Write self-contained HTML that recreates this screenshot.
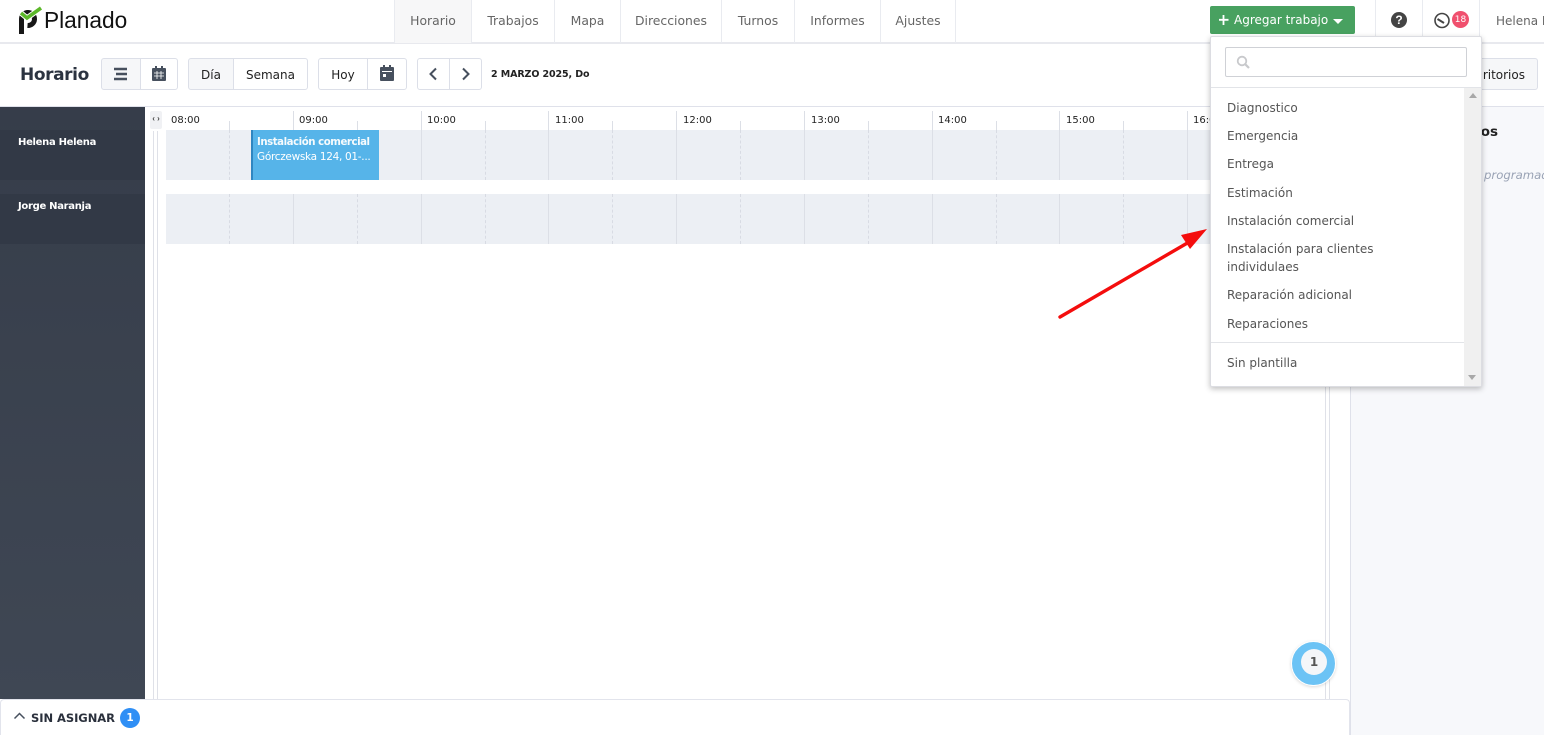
<!DOCTYPE html>
<html lang="es"><head><meta charset="utf-8"><title>Planado</title>
<style>
*{box-sizing:border-box}
html,body{margin:0;padding:0;width:1544px;height:735px;overflow:hidden;background:#fff;font-family:"DejaVu Sans","Liberation Sans",sans-serif;color:#333}
.a{position:absolute;white-space:nowrap}
.nav{top:0;height:43px;line-height:42px;font-size:12.4px;color:#666;border-right:1px solid #e9ebf0;text-align:center}
.b{top:58px;height:32px;border:1px solid #dcdfe8;line-height:32px;font-size:12px;text-align:center;color:#222;background:#fff}
.h{top:114px;font-size:10px;color:#222;line-height:14px}
.l{width:1px;background:#dcdfe6}
.d{width:0;border-left:1px dashed #d8dbe3}
.m{left:1227px;font-size:12px;color:#555;line-height:20px}
.n{left:18px;font:bold 10px/14px 'DejaVu Sans',sans-serif;color:#fff;letter-spacing:-.3px}
</style></head><body>
<!-- top bar -->
<div class="a" style="left:0;top:0;width:1544px;height:44px;border-bottom:2px solid #e8e9ee;background:#fff"></div>
<svg class="a" style="left:0;top:0" width="44" height="40" viewBox="0 0 44 40">
<path d="M21.500 34V19a6.500 6.500 0 1 1 6 6.500" fill="none" stroke="#171717" stroke-width="5"/>
<path d="M21 13l6 5L41 8" fill="none" stroke="#fff" stroke-width="5.500"/>
<path d="M21 13l6 5L41 8" fill="none" stroke="#5cb82a" stroke-width="3.600"/></svg>
<div class="a" style="left:44px;top:7px;font:22.700px/26px 'Liberation Sans',sans-serif;color:#111">Planado</div>
<div class="a nav" style="left:394px;width:78px;background:#f7f7f8;border-left:1px solid #e9ebf0">Horario</div>
<div class="a nav" style="left:472px;width:83px">Trabajos</div>
<div class="a nav" style="left:555px;width:66px">Mapa</div>
<div class="a nav" style="left:621px;width:101px">Direcciones</div>
<div class="a nav" style="left:722px;width:73px">Turnos</div>
<div class="a nav" style="left:795px;width:86px">Informes</div>
<div class="a nav" style="left:881px;width:75px">Ajustes</div>
<div class="a" style="left:1210px;top:6px;width:145px;height:28px;background:#48a160;border-radius:2px;color:#fff;font-size:12px;line-height:29px;padding-left:24px">Agregar trabajo</div>
<svg class="a" style="left:1218px;top:14px" width="12" height="12"><path d="M5.500 1v10M1 5.800h9.500" stroke="#fff" stroke-width="1.800"/></svg>
<div class="a" style="left:1333px;top:19px;border:5px solid transparent;border-top:5px solid #fff;border-bottom:0"></div>
<div class="a l" style="left:1375px;top:0;height:43px;background:#e9ebf0"></div>
<div class="a l" style="left:1422px;top:0;height:43px;background:#e9ebf0"></div>
<div class="a l" style="left:1479px;top:0;height:43px;background:#e9ebf0"></div>
<div class="a" style="left:1391px;top:12px;width:16px;height:16px;border-radius:50%;background:#444;color:#fff;font:bold 12px/16px 'Liberation Sans',sans-serif;text-align:center">?</div>
<svg class="a" style="left:1434px;top:12px" width="17" height="17" viewBox="0 0 17 17"><circle cx="8" cy="8.500" r="7" fill="none" stroke="#444" stroke-width="1.600"/><path d="M3.500 7l6.500 4" stroke="#444" stroke-width="2"/></svg>
<div class="a" style="left:1452px;top:11px;width:17px;height:17px;border-radius:50%;background:#f0506e;color:#fff;font-size:9px;line-height:18px;text-align:center">18</div>
<div class="a" style="left:1496px;top:13px;font-size:12px;line-height:16px;color:#666">Helena H</div>
<!-- toolbar -->
<div class="a" style="left:20px;top:63px;font:bold 17px/24px 'DejaVu Sans',sans-serif;color:#2b3340;letter-spacing:-.4px">Horario</div>
<div class="a b" style="left:101px;width:40px;background:#f6f7f9;border-radius:3px 0 0 3px"></div>
<div class="a b" style="left:140px;width:38px;border-radius:0 3px 3px 0"></div>
<svg class="a" style="left:113px;top:67px" width="16" height="14"><path d="M1 2h13M3 7h11M1 12h13" stroke="#47505e" stroke-width="2.500"/></svg>
<svg class="a" style="left:152px;top:66px" width="14" height="15"><path d="M3 0h2v2h4V0h2v2h2a1 1 0 0 1 1 1v11a1 1 0 0 1-1 1H1a1 1 0 0 1-1-1V3a1 1 0 0 1 1-1h2z" fill="#47505e"/><path d="M2 7h10M2 10h10M5 5v8M9 5v8" stroke="#fff" stroke-width=".8"/></svg>
<div class="a b" style="left:188px;width:46px;background:#f6f7f9;border-radius:3px 0 0 3px">Día</div>
<div class="a b" style="left:233px;width:75px;border-radius:0 3px 3px 0">Semana</div>
<div class="a b" style="left:318px;width:50px;border-radius:3px 0 0 3px">Hoy</div>
<div class="a b" style="left:367px;width:40px;border-radius:0 3px 3px 0"></div>
<svg class="a" style="left:380px;top:65px" width="14" height="16"><path d="M3 0h2v2h4V0h2v2h2a1 1 0 0 1 1 1v12a1 1 0 0 1-1 1H1a1 1 0 0 1-1-1V3a1 1 0 0 1 1-1h2z" fill="#47505e"/><path d="M2 6h10v1H2z" fill="#fff"/><path d="M3 9h3v3H3z" fill="#fff"/></svg>
<div class="a b" style="left:417px;width:33px;border-radius:3px 0 0 3px"></div>
<div class="a b" style="left:449px;width:33px;border-radius:0 3px 3px 0"></div>
<svg class="a" style="left:428px;top:67px" width="10" height="14"><path d="M8 1.500L2.500 7 8 12.500" fill="none" stroke="#47505e" stroke-width="2"/></svg>
<svg class="a" style="left:461px;top:67px" width="10" height="14"><path d="M2 1.500L7.500 7 2 12.500" fill="none" stroke="#47505e" stroke-width="2"/></svg>
<div class="a" style="left:491px;top:68px;font:bold 9.500px/14px 'DejaVu Sans',sans-serif;color:#222;letter-spacing:-.1px">2 MARZO 2025, Do</div>
<div class="a b" style="left:1400px;width:138px;background:#f6f7f9;border-radius:3px;text-align:right;padding-right:12px">ritorios</div>
<!-- main -->
<div class="a" style="left:0;top:106px;width:1544px;height:1px;background:#dfe1ea"></div>
<div class="a" style="left:0;top:107px;width:145px;height:592px;background:linear-gradient(#363d4a,#3f4754)"></div>
<div class="a" style="left:0;top:130px;width:145px;height:50px;background:#323946"></div>
<div class="a" style="left:0;top:194px;width:145px;height:50px;background:#323946"></div>
<div class="a n" style="top:136px">Helena Helena</div>
<div class="a n" style="top:200px">Jorge Naranja</div>
<div class="a" style="left:150px;top:111px;width:12px;height:18px;background:#f0f1f4;border-radius:2px;font:bold 8px/17px 'Liberation Mono',monospace;text-align:center;color:#444">‹›</div>
<div class="a" style="left:153px;top:131px;width:5px;height:568px;border-left:1px solid #dfe1e8;border-right:1px solid #dfe1e8"></div>
<div class="a" style="left:1325px;top:107px;width:5px;height:592px;border-left:1px solid #dfe1e8;border-right:1px solid #dfe1e8"></div>
<div class="a" style="left:1350px;top:107px;width:194px;height:628px;background:#f7f8fb;border-left:1px solid #dfe1ea"></div>
<div class="a" style="left:1470px;top:124px;width:28px;text-align:right;font:bold 13.500px/16px 'DejaVu Sans',sans-serif;color:#222">jos</div>
<div class="a" style="left:1484px;top:167px;font:italic 11.700px/16px 'DejaVu Sans',sans-serif;color:#9aa3b5">programado</div>
<!-- rows -->
<div class="a" style="left:166px;top:130px;width:1159px;height:50px;background:#eceff4"></div>
<div class="a" style="left:166px;top:194px;width:1159px;height:50px;background:#eceff4"></div>
<!-- header ticks & hours -->
<div class="a l" style="left:293px;top:111px;height:19px"></div><div class="a l" style="left:421px;top:111px;height:19px"></div><div class="a l" style="left:548px;top:111px;height:19px"></div><div class="a l" style="left:676px;top:111px;height:19px"></div><div class="a l" style="left:804px;top:111px;height:19px"></div><div class="a l" style="left:932px;top:111px;height:19px"></div><div class="a l" style="left:1059px;top:111px;height:19px"></div><div class="a l" style="left:1187px;top:111px;height:19px"></div>
<div class="a l" style="left:229px;top:121px;height:9px"></div><div class="a l" style="left:357px;top:121px;height:9px"></div><div class="a l" style="left:485px;top:121px;height:9px"></div><div class="a l" style="left:612px;top:121px;height:9px"></div><div class="a l" style="left:740px;top:121px;height:9px"></div><div class="a l" style="left:868px;top:121px;height:9px"></div><div class="a l" style="left:996px;top:121px;height:9px"></div><div class="a l" style="left:1123px;top:121px;height:9px"></div>
<div class="a h" style="left:171px">08:00</div><div class="a h" style="left:299px">09:00</div><div class="a h" style="left:427px">10:00</div><div class="a h" style="left:555px">11:00</div><div class="a h" style="left:683px">12:00</div><div class="a h" style="left:811px">13:00</div><div class="a h" style="left:938px">14:00</div><div class="a h" style="left:1066px">15:00</div><div class="a h" style="left:1193px">16:00</div>
<!-- row lines -->
<div class="a l" style="left:293px;top:130px;height:50px"></div><div class="a l" style="left:421px;top:130px;height:50px"></div><div class="a l" style="left:548px;top:130px;height:50px"></div><div class="a l" style="left:676px;top:130px;height:50px"></div><div class="a l" style="left:804px;top:130px;height:50px"></div><div class="a l" style="left:932px;top:130px;height:50px"></div><div class="a l" style="left:1059px;top:130px;height:50px"></div><div class="a l" style="left:1187px;top:130px;height:50px"></div>
<div class="a l" style="left:293px;top:194px;height:50px"></div><div class="a l" style="left:421px;top:194px;height:50px"></div><div class="a l" style="left:548px;top:194px;height:50px"></div><div class="a l" style="left:676px;top:194px;height:50px"></div><div class="a l" style="left:804px;top:194px;height:50px"></div><div class="a l" style="left:932px;top:194px;height:50px"></div><div class="a l" style="left:1059px;top:194px;height:50px"></div><div class="a l" style="left:1187px;top:194px;height:50px"></div>
<div class="a d" style="left:229px;top:130px;height:50px"></div><div class="a d" style="left:485px;top:130px;height:50px"></div><div class="a d" style="left:612px;top:130px;height:50px"></div><div class="a d" style="left:740px;top:130px;height:50px"></div><div class="a d" style="left:868px;top:130px;height:50px"></div><div class="a d" style="left:996px;top:130px;height:50px"></div><div class="a d" style="left:1123px;top:130px;height:50px"></div>
<div class="a d" style="left:229px;top:194px;height:50px"></div><div class="a d" style="left:357px;top:194px;height:50px"></div><div class="a d" style="left:485px;top:194px;height:50px"></div><div class="a d" style="left:612px;top:194px;height:50px"></div><div class="a d" style="left:740px;top:194px;height:50px"></div><div class="a d" style="left:868px;top:194px;height:50px"></div><div class="a d" style="left:996px;top:194px;height:50px"></div><div class="a d" style="left:1123px;top:194px;height:50px"></div>
<!-- job -->
<div class="a" style="left:251px;top:130px;width:128px;height:50px;background:#56b4e9;border-left:2px solid #2f86c1;color:#fff;padding:6px 0 0 4px;overflow:hidden">
<div style="font:bold 10.200px/14px 'DejaVu Sans',sans-serif;letter-spacing:-.45px;opacity:.95">Instalación comercial</div>
<div style="font:10.500px/14px 'DejaVu Sans',sans-serif;letter-spacing:-.3px">Górczewska 124, 01-...</div></div>
<!-- badge -->
<div class="a" style="left:1291px;top:641px;width:45px;height:45px;border-radius:50%;background:#6cc3f5;border:1px solid #fff;box-shadow:0 1px 3px rgba(0,0,0,.15)"></div>
<div class="a" style="left:1301px;top:649px;width:26px;height:26px;border-radius:50%;background:#f4f6f9;color:#555;font:bold 12px/27px 'DejaVu Sans',sans-serif;text-align:center">1</div>
<!-- bottom -->
<div class="a" style="left:0;top:699px;width:1350px;height:36px;background:#fff;border:1px solid #e2e4ec;border-bottom:0;border-radius:4px 4px 0 0"></div>
<svg class="a" style="left:13px;top:711px" width="13" height="9"><path d="M1.500 7.500L6.500 2.500l5 5" fill="none" stroke="#47505e" stroke-width="1.500"/></svg>
<div class="a" style="left:31px;top:711px;font:bold 11.500px/15px 'DejaVu Sans',sans-serif;color:#2a303c;letter-spacing:-.05px">SIN ASIGNAR</div>
<div class="a" style="left:120px;top:708px;width:20px;height:20px;border-radius:50%;background:#2f8ff5;color:#fff;font:bold 10.500px/21px 'DejaVu Sans',sans-serif;text-align:center">1</div>
<!-- arrow -->
<svg class="a" style="left:1050px;top:220px" width="170" height="110"><path d="M10 97L146 18" stroke="#f40d0d" stroke-width="3.400" stroke-linecap="round"/><path d="M157 9L131 15l9 14z" fill="#f40d0d"/></svg>
<!-- dropdown -->
<div class="a" style="left:1210px;top:36px;width:272px;height:351px;background:#fff;border:1px solid #dcdde2;border-radius:2px;box-shadow:0 2px 6px rgba(0,0,0,.25)"></div>
<div class="a" style="left:1225px;top:47px;width:242px;height:30px;background:#fff;border:1px solid #cfd1d6;border-radius:2px"></div>
<svg class="a" style="left:1236px;top:55px" width="15" height="15"><circle cx="6" cy="6" r="4.300" fill="none" stroke="#c8c9cc" stroke-width="1.800"/><path d="M9.200 9.200L13 13" stroke="#c8c9cc" stroke-width="2.200"/></svg>
<div class="a" style="left:1211px;top:87px;width:270px;height:1px;background:#e2e4e8"></div>
<div class="a" style="left:1464px;top:88px;width:17px;height:298px;background:#f0f0f0"></div>
<div class="a" style="left:1469px;top:93px;border:4px solid transparent;border-bottom:5px solid #a8a8a8;border-top:0"></div>
<div class="a" style="left:1468px;top:375px;border:4px solid transparent;border-top:5px solid #a8a8a8;border-bottom:0"></div>
<div class="a m" style="top:98px">Diagnostico</div>
<div class="a m" style="top:126px">Emergencia</div>
<div class="a m" style="top:154px">Entrega</div>
<div class="a m" style="top:183px">Estimación</div>
<div class="a m" style="top:211px">Instalación comercial</div>
<div class="a m" style="top:239px;line-height:18px;padding-top:1px">Instalación para clientes<br>individulaes</div>
<div class="a m" style="top:285px">Reparación adicional</div>
<div class="a m" style="top:314px">Reparaciones</div>
<div class="a" style="left:1211px;top:342px;width:253px;height:1px;background:#e2e4e8"></div>
<div class="a m" style="top:353px">Sin plantilla</div>
</body></html>
